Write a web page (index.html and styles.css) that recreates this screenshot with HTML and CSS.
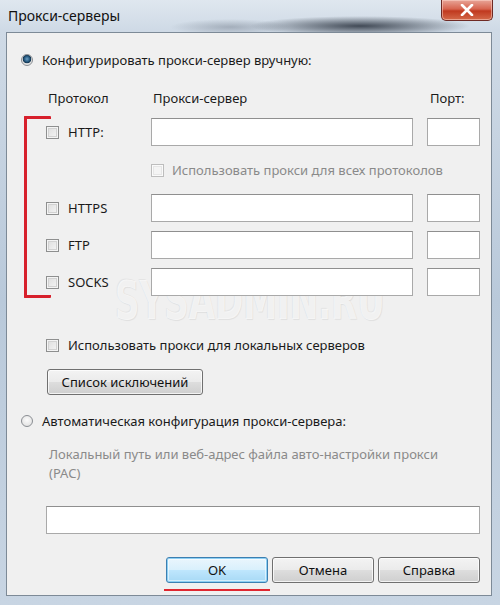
FILE: index.html
```html
<!DOCTYPE html>
<html lang="ru">
<head>
<meta charset="utf-8">
<title>Прокси-серверы</title>
<link rel="stylesheet" href="styles.css">
</head>
<body>
<div class="window">
  <div class="titlebar">
    <span class="title">Прокси-серверы</span>
    <span class="close" aria-label="Закрыть">
      <svg width="14" height="12" viewBox="0 0 14 12"><path d="M2 1 L12 11 M12 1 L2 11" stroke="#fff" stroke-width="2.6" stroke-linecap="round"/></svg>
    </span>
  </div>
  <div class="client">
    <div class="watermark">SYSADMIN.RU</div>

    <label class="row radio-row first">
      <span class="radio checked"></span>
      <span>Конфигурировать прокси-сервер вручную:</span>
    </label>

    <div class="proto-head">
      <span class="h-proto">Протокол</span>
      <span class="h-server">Прокси-сервер</span>
      <span class="h-port">Порт:</span>
    </div>

    <div class="protocols">
      <div class="bracket"></div>
      <div class="prow">
        <label class="plabel"><span class="cb"></span><span>HTTP:</span></label>
        <span class="field server"></span>
        <span class="field port"></span>
      </div>
      <label class="allrow disabled"><span class="cb dis"></span><span>Использовать прокси для всех протоколов</span></label>
      <div class="prow">
        <label class="plabel"><span class="cb"></span><span>HTTPS</span></label>
        <span class="field server"></span>
        <span class="field port"></span>
      </div>
      <div class="prow">
        <label class="plabel"><span class="cb"></span><span>FTP</span></label>
        <span class="field server"></span>
        <span class="field port"></span>
      </div>
      <div class="prow">
        <label class="plabel"><span class="cb"></span><span>SOCKS</span></label>
        <span class="field server"></span>
        <span class="field port"></span>
      </div>
    </div>

    <label class="row local">
      <span class="cb"></span>
      <span>Использовать прокси для локальных серверов</span>
    </label>

    <div class="excl-wrap"><span class="btn excl">Список исключений</span></div>

    <label class="row radio-row auto">
      <span class="radio"></span>
      <span>Автоматическая конфигурация прокси-сервера:</span>
    </label>

    <p class="pac-text">Локальный путь или веб-адрес файла авто-настройки прокси<br>(PAC)</p>

    <span class="field pac"></span>

    <div class="buttons">
      <span class="btn dlg ok">OK</span>
      <span class="btn dlg">Отмена</span>
      <span class="btn dlg">Справка</span>
    </div>
    <div class="ok-mark"></div>
  </div>
</div>
</body>
</html>
```

FILE: styles.css
```css
* { box-sizing: border-box; }

html, body {
  margin: 0;
  padding: 0;
  width: 500px;
  height: 605px;
  overflow: hidden;
  font-family: "Noto Sans", "Open Sans", sans-serif;
  font-size: 13px;
  color: #1a1a1a;
}

.window {
  width: 500px;
  height: 605px;
  padding: 0 8px 9px 6px;
  display: flex;
  flex-direction: column;
  background:
    radial-gradient(ellipse 110px 10px at 360px 26px, rgba(40,48,60,0.85), rgba(40,48,60,0) 100%),
    radial-gradient(ellipse 60px 8px at 230px 27px, rgba(80,90,105,0.35), rgba(80,90,105,0) 100%),
    linear-gradient(180deg, #dfe7ef 0px, #cfdae6 30px, #b9c9da 300px, #c8d5e3 605px);
}

.titlebar {
  height: 32px;
  flex: none;
  display: flex;
  justify-content: space-between;
  align-items: flex-start;
}

.title {
  margin-top: 6px;
  margin-left: 2px;
  font-size: 14px;
  color: #111;
}

.close {
  width: 52px;
  height: 21px;
  margin-right: -1px;
  display: flex;
  align-items: center;
  justify-content: center;
  border: 1px solid #6e2a24;
  border-top: none;
  border-radius: 0 0 5px 5px;
  background: linear-gradient(180deg, #e8a598 0%, #d7644f 45%, #c0391f 55%, #d46a4a 100%);
  box-shadow: inset 0 0 0 1px rgba(255,220,210,0.5);
}

.client {
  position: relative;
  flex: 1;
  background: #f0f0f0;
  border: 1px solid #7d8a97;
  padding: 0 0 0 14px;
}

.row {
  position: relative;
  display: flex;
  align-items: center;
  height: 20px;
}

.radio-row { gap: 9px; }
.first { margin-top: 17px; }

.radio {
  width: 12px;
  height: 12px;
  border-radius: 50%;
  border: 1px solid #8a8e93;
  background: radial-gradient(circle at 50% 40%, #fbfbfb, #dcdcdc);
  flex: none;
}
.radio.checked {
  background: radial-gradient(circle at 50% 40%, #6da0c4 0, #2b5f86 2.5px, #12344f 4px, #dedede 4.6px, #f2f2f2 100%);
}

.proto-head {
  display: flex;
  margin-top: 18px;
  height: 20px;
  align-items: center;
}
.h-proto { margin-left: 27px; width: 105px; }
.h-server { width: 277px; }

.protocols {
  position: relative;
  margin-top: 10px;
  padding-left: 25px;
}

.bracket {
  position: absolute;
  left: 3px;
  top: -2px;
  width: 27px;
  height: 182px;
  border: 3px solid #d7202c;
  border-right: none;
  border-radius: 1px;
}

.prow {
  position: relative;
  display: flex;
  align-items: center;
  height: 28px;
  margin-bottom: 9px;
}

.plabel {
  display: flex;
  align-items: center;
  gap: 9px;
  width: 105px;
}

.cb {
  width: 13px;
  height: 13px;
  border: 1px solid #8e8f8f;
  background: linear-gradient(135deg, #dcdcdc, #f6f6f6);
  box-shadow: inset 0 0 0 1px #f4f4f4, inset 0 0 0 2px #d2d2d2;
  flex: none;
}
.cb.dis {
  border-color: #bdbdbd;
  background: #f4f4f4;
  box-shadow: inset 0 0 0 1px #fafafa, inset 0 0 0 2px #e6e6e6;
}

.field {
  display: block;
  height: 28px;
  background: #fff;
  border: 1px solid #a9a9a9;
  border-top-color: #8f8f8f;
}
.server { width: 262px; }
.port { width: 53px; margin-left: 14px; }

.allrow {
  display: flex;
  align-items: center;
  gap: 8px;
  margin: 14px 0 14px 105px;
  height: 20px;
}
.disabled { color: #8a8a8a; }

.local {
  gap: 9px;
  margin-top: 39px;
  margin-left: 25px;
}

.excl-wrap {
  margin-top: 14px;
  margin-left: 26px;
}

.btn {
  display: inline-flex;
  align-items: center;
  justify-content: center;
  height: 26px;
  border: 1px solid #707070;
  border-radius: 3px;
  background: linear-gradient(180deg, #f3f3f3 0%, #ebebeb 48%, #dddddd 52%, #cfcfcf 100%);
  box-shadow: inset 0 0 0 1px rgba(255,255,255,0.75);
  color: #111;
}
.excl { width: 156px; }

.auto { margin-top: 16px; }

.pac-text {
  margin: 14px 0 0 28px;
  line-height: 19px;
  color: #8a8a8a;
}

.field.pac {
  width: 434px;
  margin: 23px 0 0 25px;
}

.buttons {
  display: flex;
  gap: 4px;
  margin: 23px 0 0 145px;
}
.dlg { width: 102px; }
.ok {
  border-color: #3c7fb1;
  background: linear-gradient(180deg, #eaf6fd 0%, #d9f0fc 48%, #bee6fd 52%, #a7d9f5 100%);
  box-shadow: inset 0 0 0 1px #8ed0f4, inset 0 0 0 2px rgba(255,255,255,0.5);
}

.ok-mark {
  width: 106px;
  height: 2px;
  margin: 6px 0 0 143px;
  background: #e0262f;
}

.watermark {
  position: absolute;
  left: 108px;
  top: 241px;
  font-family: "DejaVu Sans", sans-serif;
  font-weight: bold;
  font-size: 54px;
  line-height: 54px;
  white-space: nowrap;
  transform: scaleX(0.63);
  transform-origin: left top;
  color: rgba(255,255,255,0.7);
  text-shadow: 1px 1px 1px rgba(0,0,0,0.07), -1px -1px 1px rgba(0,0,0,0.05);
  pointer-events: none;
}
```
